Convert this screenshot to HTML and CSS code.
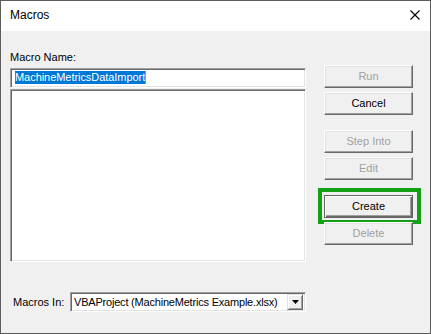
FILE: index.html
```html
<!DOCTYPE html>
<html>
<head>
<meta charset="utf-8">
<link rel="stylesheet" href="styles.css">
</head>
<body>
<div class="window">
  <div class="titlebar">
    <span class="title">Macros</span>
    <span class="close"><svg width="10" height="10" viewBox="0 0 10 10"><path d="M0.5 0.5 L9.5 9.5 M9.5 0.5 L0.5 9.5" stroke="#000" stroke-width="1.1" fill="none"/></svg></span>
  </div>
  <div class="content">
    <div class="main">
      <div class="left">
        <div class="label">Macro Name:</div>
        <div class="input"><span class="sel">MachineMetricsDataImport</span><span class="caret"></span></div>
        <div class="list"></div>
      </div>
      <div class="buttons">
        <div class="btn disabled">Run</div>
        <div class="btn">Cancel</div>
        <div class="btn disabled group">Step Into</div>
        <div class="btn disabled">Edit</div>
        <div class="btn default group">Create<span class="highlight"></span></div>
        <div class="btn disabled">Delete</div>
      </div>
    </div>
    <div class="bottom">
      <span class="in-label">Macros In:</span>
      <div class="combo">
        <span class="combo-text">VBAProject (MachineMetrics Example.xlsx)</span>
        <span class="drop"><svg width="7" height="4" viewBox="0 0 7 4"><path d="M0 0 H7 L3.5 4 Z" fill="#000"/></svg></span>
      </div>
    </div>
  </div>
</div>
</body>
</html>
```

FILE: styles.css
```css
* { box-sizing: border-box; }
html, body { margin: 0; padding: 0; background: #f0f0f0; }
body {
  font-family: "Liberation Sans", Arial, sans-serif;
  font-size: 11px;
  color: #000;
}
.window {
  width: 431px;
  height: 334px;
  border: 1px solid #5c5c5c;
  background: #f0f0f0;
  display: flex;
  flex-direction: column;
}
.titlebar {
  height: 30px;
  background: #fff;
  display: flex;
  align-items: center;
  justify-content: space-between;
  padding: 0 10px 2px 9px;
}
.title {
  font-size: 12px;
  line-height: 14px;
  color: #000;
}
.close {
  display: flex;
  width: 10px;
  height: 10px;
}
.content {
  flex: 1;
  padding: 20px 0 0 9px;
}
.main {
  display: grid;
  grid-template-columns: 296px 89px;
  column-gap: 18px;
  align-items: start;
}
.label {
  line-height: 13px;
  height: 13px;
}
.input {
  margin-top: 4px;
  height: 20px;
  background: #fff;
  border-top: 1px solid #a0a0a0;
  border-left: 1px solid #a0a0a0;
  border-right: 1px solid #fff;
  border-bottom: 1px solid #fff;
  box-shadow: inset 1px 1px 0 #696969, inset -1px -1px 0 #e3e3e3;
  padding: 2px 0 0 4px;
  display: flex;
  align-items: flex-start;
}
.sel {
  background: #0078d7;
  color: #fff;
  line-height: 13px;
  height: 13px;
  white-space: nowrap;
  letter-spacing: -0.05px;
}
.caret {
  width: 1px;
  height: 13px;
  background: #f7801e;
}
.list {
  margin-top: 1px;
  height: 173px;
  background: #fff;
  border-top: 1px solid #a0a0a0;
  border-left: 1px solid #a0a0a0;
  border-right: 1px solid #fff;
  border-bottom: 1px solid #fff;
  box-shadow: inset 1px 1px 0 #696969, inset -1px -1px 0 #e3e3e3;
}
.buttons {
  padding-top: 14px;
  display: flex;
  flex-direction: column;
  gap: 4px;
}
.btn {
  position: relative;
  height: 23px;
  background: #f0f0f0;
  border-top: 1px solid #fff;
  border-left: 1px solid #fff;
  border-right: 1px solid #696969;
  border-bottom: 1px solid #696969;
  box-shadow: inset -1px -1px 0 #a0a0a0, inset 1px 1px 0 #e3e3e3;
  display: flex;
  align-items: center;
  justify-content: center;
  line-height: 13px;
  color: #000;
}
.btn.disabled { color: #a0a0a0; }
.btn.group { margin-top: 11px; }
.btn.default {
  border: 1px solid #646464;
  box-shadow: inset 1px 1px 0 #fff, inset -1px -1px 0 #696969, inset -2px -2px 0 #a0a0a0;
}
.highlight {
  position: absolute;
  left: -7px;
  top: -8px;
  right: -9px;
  bottom: -7px;
  border: 4px solid #14a014;
  pointer-events: none;
}
.bottom {
  margin-top: 30px;
  padding-left: 3px;
  display: flex;
  align-items: center;
}
.in-label {
  width: 57px;
  line-height: 13px;
}
.combo {
  width: 236px;
  height: 20px;
  background: #fff;
  border-top: 1px solid #a0a0a0;
  border-left: 1px solid #a0a0a0;
  border-right: 1px solid #fff;
  border-bottom: 1px solid #fff;
  box-shadow: inset 1px 1px 0 #696969, inset -1px -1px 0 #e3e3e3;
  padding: 1px 2px 1px 3px;
  display: flex;
  align-items: center;
  justify-content: space-between;
}
.combo-text {
  line-height: 13px;
  white-space: nowrap;
  letter-spacing: -0.2px;
}
.drop {
  width: 16px;
  height: 16px;
  background: #f0f0f0;
  border-top: 1px solid #e3e3e3;
  border-left: 1px solid #e3e3e3;
  border-right: 1px solid #696969;
  border-bottom: 1px solid #696969;
  box-shadow: inset 1px 1px 0 #fff, inset -1px -1px 0 #a0a0a0;
  display: flex;
  align-items: center;
  justify-content: center;
}
.drop svg { display: block; }
```
